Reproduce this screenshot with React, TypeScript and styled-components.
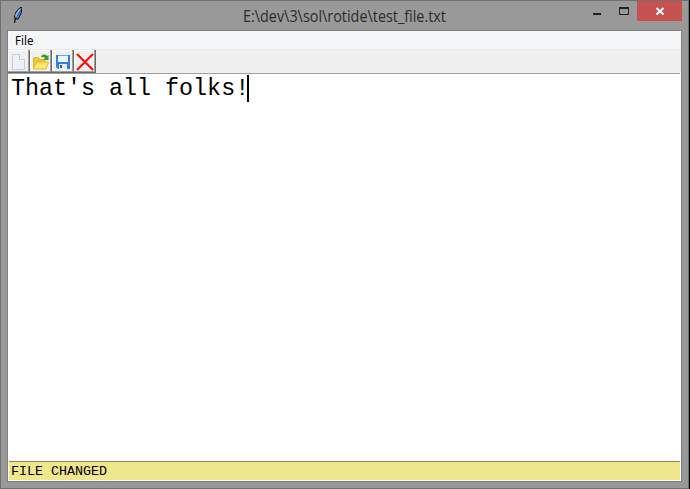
import React from "react";
import styled, { createGlobalStyle } from "styled-components";

const GlobalStyle = createGlobalStyle`
  * { box-sizing: border-box; }
  html, body { margin: 0; background: #000; overflow: hidden; }
`;

const Window = styled.div`
  display: flex;
  flex-direction: column;
  width: 689px;
  height: 489px;
  padding: 0 6px 6px 6px;
  background: #999;
  border: 1px solid #707070;
`;

const TitleBar = styled.header`
  display: grid;
  grid-template-columns: 24px 1fr 101px;
  flex: 0 0 29px;
`;

const AppIcon = styled.svg`
  width: 16px;
  height: 16px;
  margin: 6px 0 0 3px;
`;

const Title = styled.h1`
  margin: 0;
  padding-left: 212px;
  font: 400 15.7px/30px "Open Sans", "Noto Sans", sans-serif;
  height: 29px;
  white-space: nowrap;
  color: #2b2b2b;
`;

const TitleText = styled.span`
  display: inline-block;
  transform: scaleX(0.917);
  transform-origin: left center;
`;

const Controls = styled.div`
  display: grid;
  grid-template-columns: 29px 27px 45px;
  height: 20px;
`;

const ControlButton = styled.button<{ $danger?: boolean }>`
  padding: 0;
  border: 0;
  line-height: 0;
  background: ${({ $danger }) => ($danger ? "#c75050" : "transparent")};

  svg { display: block; width: 100%; height: 20px; }
`;

const Client = styled.main`
  display: flex;
  flex: 1;
  flex-direction: column;
  min-height: 0;
  border: 1px solid #808080;
  background: #fff;
`;

const MenuBar = styled.nav`
  flex: 0 0 19px;
  min-height: 0;
  padding-left: 7px;
  border-bottom: 1px solid #e8e8e8;
  background: #f5f6f7;
  font: 400 12px/19px "Noto Sans", "Open Sans", sans-serif;
  color: #000;
`;

const MenuItem = styled.span`
  display: inline-block;
  transform: scaleX(0.96);
  transform-origin: left center;
`;

const Toolbar = styled.div`
  display: flex;
  flex: 0 0 23px;
  background: #f0f0f0;
`;

const ToolButton = styled.button`
  width: 22px;
  height: 23px;
  padding: 0 1px 0 2px;
  border: 0;
  background: #f0f0f0;
  box-shadow: inset -1px -1px #696969, inset -2px -2px #a0a0a0, inset 1px 1px #fff;

  svg { display: block; width: 18px; height: 18px; }
`;

const Editor = styled.section`
  display: flex;
  flex: 1;
  align-items: flex-start;
  margin-right: 1px;
  padding: 1px 3px;
  border-top: 1px solid #a0a0a0;
  font: 400 23.35px/27px "Liberation Mono", monospace;
  white-space: pre;
  color: #000;
`;

const EditorLine = styled.span`
  padding-top: 1px;
`;

const Caret = styled.span`
  width: 2px;
  height: 27px;
  margin-left: -2px;
  background: #000;
`;

const StatusBar = styled.footer`
  flex: 0 0 19px;
  margin: 0 1px 1px;
  padding-left: 2px;
  border-top: 1px solid #8a8659;
  background: #f0e68c;
  font: 400 13.33px/19px "Liberation Mono", monospace;
  height: 19px;
  min-height: 0;
  overflow: hidden;
  color: #000;
`;

function FeatherIcon() {
  return (
    <AppIcon viewBox="0 0 16 16">
      <path d="M4 16 4.5 12 4 10 5 6 8 2 10.5 0H12v5l-2 5-2 2.5H6L5 16z" fill="#111" />
      <path d="m5.5 11 0-4 3-4.5L11 1v4l-2 4.5-1.5 2z" fill="#4a91d9" />
      <path d="M6 10.5V7.5L8.5 4 11 1.5" stroke="#b9dcf8" fill="none" />
      <path d="M5.5 12.5 9 6.5 11 2.5" stroke="#254d7c" strokeWidth=".6" fill="none" />
    </AppIcon>
  );
}

function NewIcon() {
  return (
    <svg viewBox="0 0 18 18">
      <path d="M2.5 1.5h7l5 5v10h-12z" fill="#edf1f8" stroke="#c5cddb" />
      <path d="M9.5 1.5v5h5" fill="#fff" stroke="#c5cddb" />
    </svg>
  );
}

function OpenIcon() {
  return (
    <svg viewBox="0 0 18 18">
      <path d="M1.5 15.5v-10l1-1h4l1.5 2h5v9z" fill="#efc52b" stroke="#dfb72c" />
      <path d="m1.5 16 3-7h12l-2.5 7z" fill="#ffe66e" stroke="#e6bd24" />
      <path d="M9 4c1-3 4-3 6-1l1.5-1v5h-5L13 5c-1-1-2-1-4-1z" fill="#399b28" />
    </svg>
  );
}

function SaveIcon() {
  return (
    <svg viewBox="0 0 18 18">
      <path d="M2 2h14v14H4l-2-2z" fill="#347fdc" />
      <path d="M4 2h10v7H4z" fill="#edf4fb" />
      <path d="M4 2h10v1H4z" fill="#68a7ed" />
      <path d="M5 11h8v5H5z" fill="#e5edf4" />
      <path d="M6 12h2v3H6z" fill="#245ba9" />
    </svg>
  );
}

function DeleteIcon() {
  return (
    <svg viewBox="0 0 18 18">
      <path d="m1 1 16 16M17 1 1 17" stroke="#ff0808" strokeWidth="2" />
    </svg>
  );
}

const tools = [
  { label: "New", Icon: NewIcon },
  { label: "Open", Icon: OpenIcon },
  { label: "Save", Icon: SaveIcon },
  { label: "Delete", Icon: DeleteIcon },
];

export default function App() {
  return (
    <>
      <GlobalStyle />
      <Window>
        <TitleBar>
          <FeatherIcon />
          <Title><TitleText>E:\dev\3\sol\rotide\test_file.txt</TitleText></Title>
          <Controls>
            <ControlButton aria-label="Minimize">
              <svg viewBox="0 0 29 20"><path d="M12 12h8v2h-8z" fill="#222" /></svg>
            </ControlButton>
            <ControlButton aria-label="Maximize">
              <svg viewBox="0 0 27 20"><path d="M9 6h10v8H9zM10 8v5h8V8z" fill="#222" fillRule="evenodd" /></svg>
            </ControlButton>
            <ControlButton $danger aria-label="Close">
              <svg viewBox="0 0 45 20"><path d="m19.5 7 7 6.5m0-6.5-7 6.5" stroke="#fff" strokeWidth="2" /></svg>
            </ControlButton>
          </Controls>
        </TitleBar>
        <Client>
          <MenuBar><MenuItem>File</MenuItem></MenuBar>
          <Toolbar>
            {tools.map(({ label, Icon }) => (
              <ToolButton key={label} aria-label={label}><Icon /></ToolButton>
            ))}
          </Toolbar>
          <Editor><EditorLine>That's all folks!</EditorLine><Caret /></Editor>
          <StatusBar>FILE CHANGED</StatusBar>
        </Client>
      </Window>
    </>
  );
}
